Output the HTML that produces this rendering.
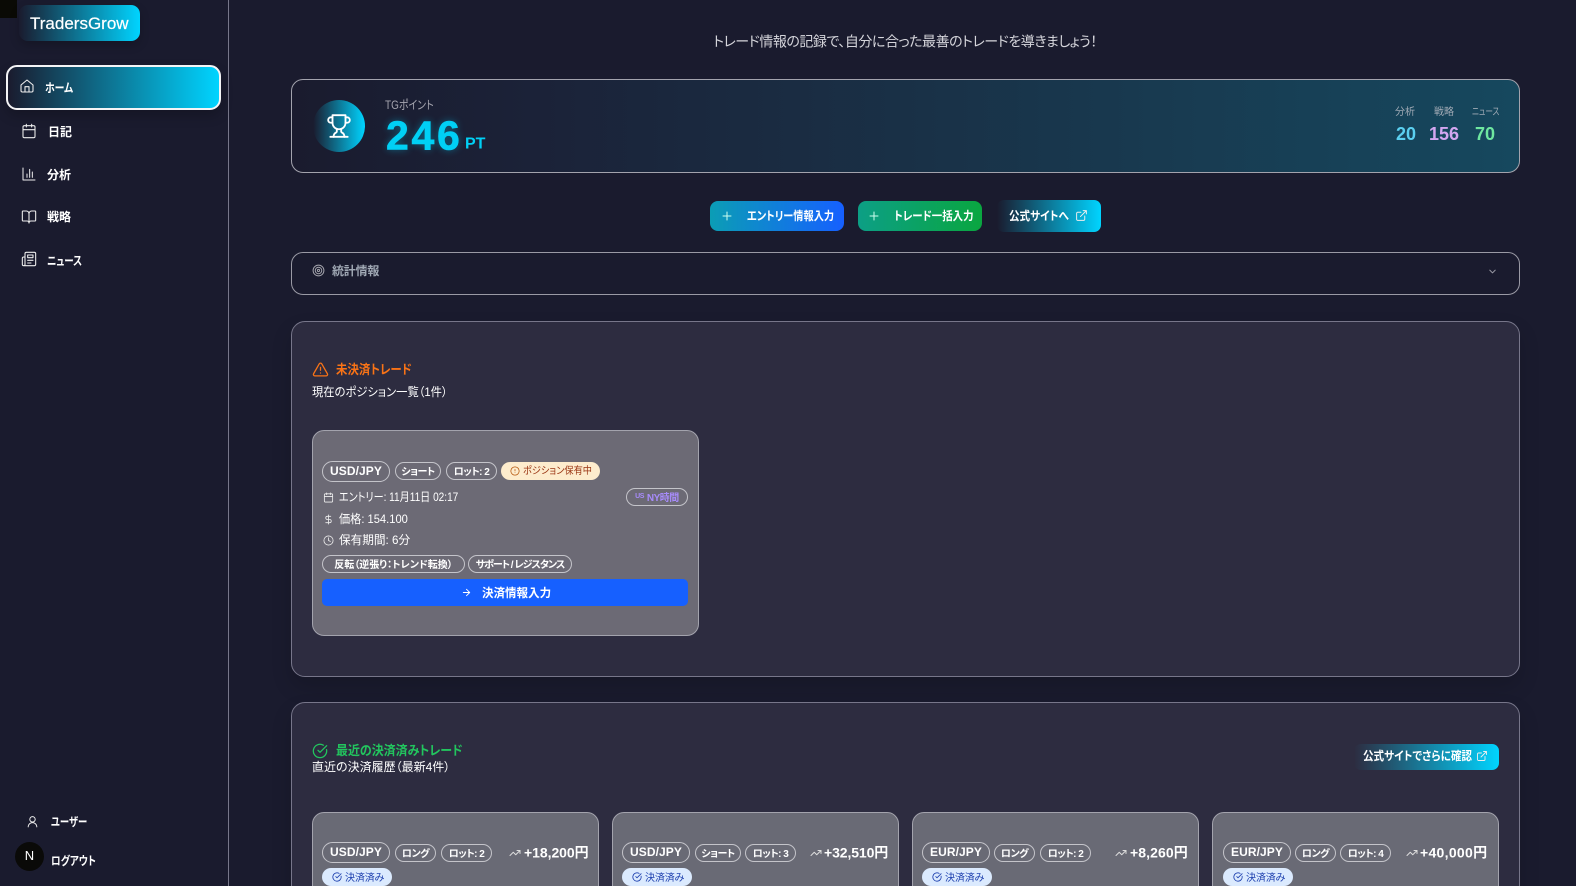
<!DOCTYPE html>
<html lang="ja"><head><meta charset="utf-8"><title>TradersGrow</title>
<style>
*{box-sizing:border-box;margin:0;padding:0}
html,body{width:1576px;height:886px;overflow:hidden;background:#1a1b2e}
body{position:relative;font-family:"Liberation Sans","Noto Sans CJK JP",sans-serif;color:#fff;font-feature-settings:"palt";font-size:12px}
.a{position:absolute}
.t{position:absolute;white-space:nowrap;transform:translateY(-50%) scaleX(var(--x,1));transform-origin:left center;line-height:1.2}
.c{transform:translate(-50%,-50%)}
.b{font-weight:700}
svg{position:absolute;fill:none;stroke:currentColor;stroke-width:2;stroke-linecap:round;stroke-linejoin:round}
.box{position:absolute;border:1px solid #a3a3ad;border-radius:12px}
.sec{position:absolute;left:291px;width:1229px;background:#2d2c40;border:1px solid #77768a;border-radius:14px;box-shadow:0 10px 20px rgba(0,0,0,.15)}
.pill{position:absolute;border:1px solid #c4c4ca;border-radius:12px;display:flex;align-items:center;justify-content:center;font-weight:700;white-space:nowrap;color:#fff;font-size:10px;padding-bottom:2px;letter-spacing:-.5px}
.pair{font-size:12px;border-radius:12px;letter-spacing:.1px;padding-bottom:1px}
.done{position:absolute;background:#dbeafe;color:#1e40af;border-radius:10px;font-size:10px;display:flex;align-items:center;white-space:nowrap;padding:0 0 1px 23px;height:18px;width:70px;letter-spacing:-.15px}
.card{position:absolute;top:812px;height:90px;width:287px;background:#696a75;border:1px solid #a3a3ad;border-radius:12px}
.grad{background:linear-gradient(90deg,#1a1b2e,#00d4ff)}
</style></head><body>

<div class="a" style="left:0;top:0;width:17px;height:18px;background:#0a0a05"></div>
<div class="a" style="left:228px;top:0;width:1px;height:886px;background:#77778a"></div>

<div class="a grad" style="left:19px;top:5px;width:121px;height:36px;border-radius:9px;box-shadow:0 4px 10px rgba(0,0,0,.2)"></div>
<div class="t" style="left:30px;top:23.500px;font-size:17px;-webkit-text-stroke:.2px #fff">TradersGrow</div>

<div class="a grad" style="left:6px;top:65px;width:215px;height:45px;border:2px solid #f4f4f6;border-radius:11px;box-shadow:0 6px 12px rgba(0,0,0,.2)"></div>
<svg style="left:19px;top:78px;color:#eee;stroke-width:1.6" width="16" height="16" viewBox="0 0 24 24"><path d="M3 10.500 12 3l9 7.500V19a2 2 0 0 1-2 2H5a2 2 0 0 1-2-2z"/><path d="M9 21v-8h6v8"/></svg>
<div class="t b" style="left:45px;top:88px;--x:.82">ホーム</div>

<svg style="left:21px;top:123px;color:#eee;stroke-width:1.6" width="16" height="16" viewBox="0 0 24 24"><rect x="3" y="4" width="18" height="18" rx="2"/><path d="M16 2v4M8 2v4M3 10h18"/></svg>
<div class="t b" style="left:48px;top:132px">日記</div>

<svg style="left:21px;top:166px;color:#eee;stroke-width:1.500" width="16" height="16" viewBox="0 0 24 24"><path d="M3 3v18h18"/><path d="M9 17v-5M13 17V5M17 17v-8"/></svg>
<div class="t b" style="left:47px;top:175px">分析</div>

<svg style="left:21px;top:209px;color:#eee;stroke-width:1.600" width="16" height="16" viewBox="0 0 24 24"><path d="M12 7v14"/><path d="M3 18a1 1 0 0 1-1-1V4a1 1 0 0 1 1-1h5a4 4 0 0 1 4 4 4 4 0 0 1 4-4h5a1 1 0 0 1 1 1v13a1 1 0 0 1-1 1h-6a3 3 0 0 0-3 3 3 3 0 0 0-3-3z"/></svg>
<div class="t b" style="left:47px;top:217px">戦略</div>

<svg style="left:21px;top:251px;color:#eee;stroke-width:1.600" width="16" height="16" viewBox="0 0 24 24"><path d="M4 22h16a2 2 0 0 0 2-2V4a2 2 0 0 0-2-2H8a2 2 0 0 0-2 2v16a2 2 0 0 1-4 0V11c0-1.100.9-2 2-2h2"/><path d="M18 14h-8M15 18h-5M10 6h8v4h-8z"/></svg>
<div class="t b" style="left:47px;top:261px;--x:.79">ニュース</div>

<svg style="left:26px;top:815px;color:#eee;stroke-width:1.800" width="13" height="13" viewBox="0 0 24 24"><circle cx="12" cy="8" r="5"/><path d="M4 22a8 8 0 0 1 16 0"/></svg>
<div class="t b" style="left:51px;top:822px;--x:.78">ユーザー</div>
<div class="a" style="left:15px;top:842px;width:29px;height:29px;border-radius:50%;background:#0a0a08;font-size:13px;text-align:center;line-height:27px">N</div>
<div class="t b" style="left:51px;top:861px;--x:.8">ログアウト</div>

<div class="t c" style="left:905px;top:42px;font-size:14px;color:#d5d5db;letter-spacing:-.47px">トレード情報の記録で、自分に合った最善のトレードを導きましょう！</div>

<div class="box" style="left:291px;top:79px;width:1229px;height:94px;background:linear-gradient(90deg,#1a1b2e,#1b2238 20%,#16485e)"></div>
<div class="a grad" style="left:313px;top:100px;width:52px;height:52px;border-radius:50%"></div>
<svg style="left:326px;top:113px;color:#fff;stroke-width:1.700" width="26" height="26" viewBox="0 0 24 24"><path d="M6 9H4.500a2.500 2.500 0 0 1 0-5H6"/><path d="M18 9h1.500a2.500 2.500 0 0 0 0-5H18"/><path d="M4 22h16"/><path d="M10 14.660V17c0 .55-.47.98-.97 1.210C7.850 18.750 7 20.240 7 22"/><path d="M14 14.660V17c0 .55.47.98.97 1.210C16.150 18.750 17 20.240 17 22"/><path d="M18 2H6v7a6 6 0 0 0 12 0V2z"/></svg>
<div class="t" style="left:385px;top:105px;color:#a6a6b0;--x:.83">TGポイント</div>
<div class="t b" style="left:386px;top:136px;font-size:41px;letter-spacing:2.700px;color:#00d0f5;-webkit-text-stroke:.6px #00d0f5;text-shadow:0 0 8px rgba(0,200,240,.45)">246</div>
<div class="t b" style="left:465px;top:144px;font-size:16px;color:#00d0f5">PT</div>

<div class="t c" style="left:1405px;top:113px;font-size:10px;color:#a0aab5">分析</div>
<div class="t c" style="left:1444px;top:113px;font-size:10px;color:#a0aab5">戦略</div>
<div class="t" style="left:1471.500px;top:113px;font-size:10px;color:#a0aab5;--x:.76">ニュース</div>
<div class="t b c" style="left:1406px;top:135px;font-size:18px;color:#5bd0f0">20</div>
<div class="t b c" style="left:1444px;top:135px;font-size:18px;color:#d3a6f0">156</div>
<div class="t b c" style="left:1485px;top:135px;font-size:18px;color:#6ee7a0">70</div>

<div class="a" style="left:710px;top:201px;width:134px;height:30px;border-radius:8px;background:linear-gradient(90deg,#0b9db5,#1660ff)"></div>
<svg style="left:721px;top:210px;color:#cfe;stroke-width:2" width="12" height="12" viewBox="0 0 24 24"><path d="M12 4v16M4 12h16"/></svg>
<div class="t b" style="left:747px;top:216px;--x:.85">エントリー情報入力</div>
<div class="a" style="left:858px;top:201px;width:124px;height:30px;border-radius:8px;background:linear-gradient(90deg,#0c9f85,#0aa640)"></div>
<svg style="left:868px;top:210px;color:#cfe;stroke-width:2" width="12" height="12" viewBox="0 0 24 24"><path d="M12 4v16M4 12h16"/></svg>
<div class="t b" style="left:894px;top:216px;--x:.87">トレード一括入力</div>
<div class="a grad" style="left:997px;top:200px;width:104px;height:32px;border-radius:7px"></div>
<div class="t b" style="left:1009px;top:216px;--x:.88">公式サイトへ</div>
<svg style="left:1075px;top:209px;color:#eee;stroke-width:1.800" width="13" height="13" viewBox="0 0 24 24"><path d="M18 13v6a2 2 0 0 1-2 2H5a2 2 0 0 1-2-2V8a2 2 0 0 1 2-2h6"/><path d="M15 3h6v6M10 14 21 3"/></svg>

<div class="box" style="left:291px;top:252px;width:1229px;height:43px;border-color:#9a9aa5;background:#1a1b2e"></div>
<svg style="left:312px;top:264px;color:#a5a5ad;stroke-width:1.800" width="13" height="13" viewBox="0 0 24 24"><circle cx="12" cy="12" r="10"/><circle cx="12" cy="12" r="6"/><circle cx="12" cy="12" r="2"/></svg>
<div class="t b" style="left:332px;top:271px;color:#a0a8b4;letter-spacing:-.2px">統計情報</div>
<svg style="left:1487px;top:266px;color:#9a9aa5;stroke-width:2" width="11" height="11" viewBox="0 0 24 24"><path d="m6 9 6 6 6-6"/></svg>

<div class="sec" style="top:321px;height:356px"></div>
<svg style="left:312px;top:361px;color:#f97316;stroke-width:1.800" width="17" height="17" viewBox="0 0 24 24"><path d="m21.730 18-8-14a2 2 0 0 0-3.480 0l-8 14A2 2 0 0 0 4 21h16a2 2 0 0 0 1.730-3z"/><path d="M12 9v4M12 17h.01"/></svg>
<div class="t b" style="left:336px;top:370px;font-size:13px;color:#f97316;--x:.88">未決済トレード</div>
<div class="t" style="left:312px;top:392px;--x:.94">現在のポジション一覧（1件）</div>

<div class="box" style="left:312px;top:430px;width:387px;height:206px;background:#6c6a75"></div>
<div class="pill pair" style="left:322px;top:461px;width:68px;height:21px">USD/JPY</div>
<div class="pill" style="left:395px;top:462px;width:46px;height:18px">ショート</div>
<div class="pill" style="left:446px;top:462px;width:51px;height:18px">ロット: 2</div>
<div class="a" style="left:501px;top:462px;width:99px;height:18px;border-radius:9px;background:#fdeccd"></div>
<svg style="left:510px;top:466px;color:#b45309;stroke-width:1.800" width="10" height="10" viewBox="0 0 24 24"><circle cx="12" cy="12" r="10"/><path d="M12 8v4M12 16h.01"/></svg>
<div class="t" style="left:523px;top:471.500px;font-size:10px;color:#9a3412;--x:.92">ポジション保有中</div>

<svg style="left:323px;top:492px;color:#eee;stroke-width:1.800" width="11" height="11" viewBox="0 0 24 24"><rect x="3" y="4" width="18" height="18" rx="2"/><path d="M16 2v4M8 2v4M3 10h18"/></svg>
<div class="t" style="left:339px;top:497px;--x:.84">エントリー: 11月11日 02:17</div>
<div class="pill" style="left:626px;top:488px;width:62px;height:18px;color:#a78bfa;border-color:#c4c4ca"><span style="font-size:7px;margin-right:3px">US</span>NY時間</div>
<svg style="left:323px;top:514px;color:#eee;stroke-width:1.800" width="11" height="11" viewBox="0 0 24 24"><path d="M12 2v20M17 5H9.500a3.500 3.500 0 0 0 0 7h5a3.500 3.500 0 0 1 0 7H6"/></svg>
<div class="t" style="left:339px;top:519px;--x:.93">価格: 154.100</div>
<svg style="left:323px;top:535px;color:#eee;stroke-width:1.800" width="11" height="11" viewBox="0 0 24 24"><circle cx="12" cy="12" r="10"/><path d="M12 6v6l4 2"/></svg>
<div class="t" style="left:339px;top:540px;--x:.97">保有期間: 6分</div>
<div class="pill" style="left:322px;top:555px;width:143px;height:18px;letter-spacing:0">反転（逆張り：トレンド転換）</div>
<div class="pill" style="left:468px;top:555px;width:104px;height:18px;letter-spacing:-1px">サポート / レジスタンス</div>
<div class="a" style="left:322px;top:579px;width:366px;height:27px;border-radius:5px;background:#1660ff"></div>
<svg style="left:461px;top:587px;color:#fff;stroke-width:2" width="11" height="11" viewBox="0 0 24 24"><path d="M5 12h14M12 5l7 7-7 7"/></svg>
<div class="t b" style="left:482px;top:593px;--x:.96">決済情報入力</div>

<div class="sec" style="top:702px;height:200px"></div>
<svg style="left:312px;top:743px;color:#22c55e;stroke-width:1.900" width="16" height="16" viewBox="0 0 24 24"><path d="M21.800 10A10 10 0 1 1 17 3.340"/><path d="m9 11 3 3L22 4"/></svg>
<div class="t b" style="left:336px;top:751px;font-size:13px;color:#22c55e;--x:.92">最近の決済済みトレード</div>
<div class="t" style="left:312px;top:767px">直近の決済履歴（最新4件）</div>
<div class="a" style="left:1354px;top:744px;width:145px;height:26px;border-radius:7px;background:linear-gradient(90deg,#2d2c40,#00d4ff)"></div>
<div class="t b" style="left:1363px;top:756px;--x:.88">公式サイトでさらに確認</div>
<svg style="left:1476px;top:750px;color:#eee;stroke-width:1.800" width="12" height="12" viewBox="0 0 24 24"><path d="M18 13v6a2 2 0 0 1-2 2H5a2 2 0 0 1-2-2V8a2 2 0 0 1 2-2h6"/><path d="M15 3h6v6M10 14 21 3"/></svg>

<div class="card" style="left:312px"></div>
<div class="card" style="left:612px"></div>
<div class="card" style="left:912px"></div>
<div class="card" style="left:1212px"></div>

<div class="pill pair" style="left:322px;top:842px;width:68px;height:21px">USD/JPY</div>
<div class="pill" style="left:395px;top:844px;width:41px;height:18px">ロング</div>
<div class="pill" style="left:441px;top:844px;width:51px;height:18px">ロット: 2</div>
<svg style="left:509px;top:847px;color:#ddd;stroke-width:2" width="12" height="12" viewBox="0 0 24 24"><path d="m22 7-8.500 8.500-5-5L2 17"/><path d="M16 7h6v6"/></svg>
<div class="t b" style="left:524px;top:852.500px;font-size:14px;letter-spacing:-.05px">+18,200円</div>
<div class="done" style="left:322px;top:868px">決済済み</div>

<div class="pill pair" style="left:622px;top:842px;width:68px;height:21px">USD/JPY</div>
<div class="pill" style="left:695px;top:844px;width:46px;height:18px">ショート</div>
<div class="pill" style="left:745px;top:844px;width:51px;height:18px">ロット: 3</div>
<svg style="left:810px;top:847px;color:#ddd;stroke-width:2" width="12" height="12" viewBox="0 0 24 24"><path d="m22 7-8.500 8.500-5-5L2 17"/><path d="M16 7h6v6"/></svg>
<div class="t b" style="left:824px;top:852.500px;font-size:14px;letter-spacing:-.1px">+32,510円</div>
<div class="done" style="left:622px;top:868px">決済済み</div>

<div class="pill pair" style="left:922px;top:842px;width:68px;height:21px">EUR/JPY</div>
<div class="pill" style="left:994px;top:844px;width:41px;height:18px">ロング</div>
<div class="pill" style="left:1040px;top:844px;width:51px;height:18px">ロット: 2</div>
<svg style="left:1115px;top:847px;color:#ddd;stroke-width:2" width="12" height="12" viewBox="0 0 24 24"><path d="m22 7-8.500 8.500-5-5L2 17"/><path d="M16 7h6v6"/></svg>
<div class="t b" style="left:1130px;top:852.500px;font-size:14px;letter-spacing:.1px">+8,260円</div>
<div class="done" style="left:922px;top:868px">決済済み</div>

<div class="pill pair" style="left:1223px;top:842px;width:68px;height:21px">EUR/JPY</div>
<div class="pill" style="left:1295px;top:844px;width:41px;height:18px">ロング</div>
<div class="pill" style="left:1340px;top:844px;width:51px;height:18px">ロット: 4</div>
<svg style="left:1406px;top:847px;color:#ddd;stroke-width:2" width="12" height="12" viewBox="0 0 24 24"><path d="m22 7-8.500 8.500-5-5L2 17"/><path d="M16 7h6v6"/></svg>
<div class="t b" style="left:1420px;top:852.500px;font-size:14px;letter-spacing:.3px">+40,000円</div>
<div class="done" style="left:1223px;top:868px">決済済み</div>

<svg style="left:332px;top:872px;color:#1e40af;stroke-width:2" width="10" height="10" viewBox="0 0 24 24"><path d="M21.800 10A10 10 0 1 1 17 3.340"/><path d="m9 11 3 3L22 4"/></svg>
<svg style="left:632px;top:872px;color:#1e40af;stroke-width:2" width="10" height="10" viewBox="0 0 24 24"><path d="M21.800 10A10 10 0 1 1 17 3.340"/><path d="m9 11 3 3L22 4"/></svg>
<svg style="left:932px;top:872px;color:#1e40af;stroke-width:2" width="10" height="10" viewBox="0 0 24 24"><path d="M21.800 10A10 10 0 1 1 17 3.340"/><path d="m9 11 3 3L22 4"/></svg>
<svg style="left:1233px;top:872px;color:#1e40af;stroke-width:2" width="10" height="10" viewBox="0 0 24 24"><path d="M21.800 10A10 10 0 1 1 17 3.340"/><path d="m9 11 3 3L22 4"/></svg>
</body></html>
